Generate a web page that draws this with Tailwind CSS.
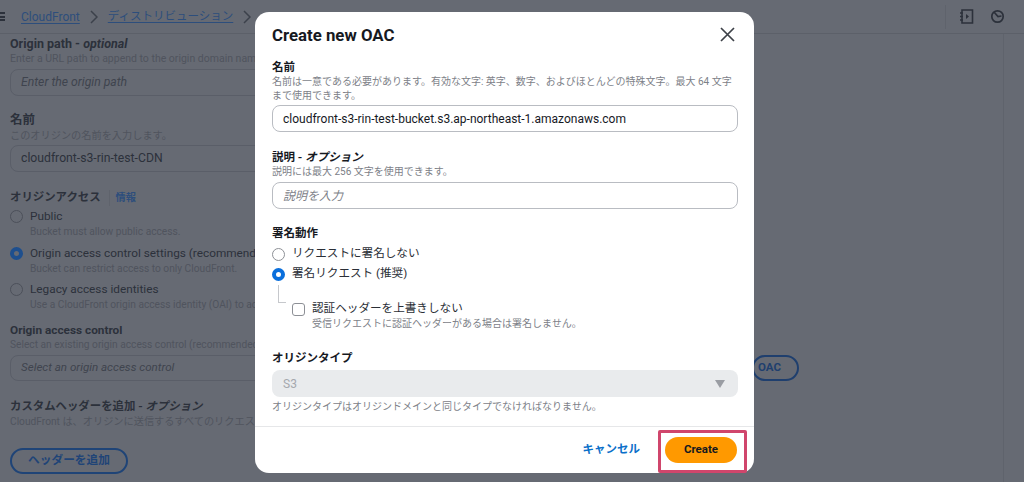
<!DOCTYPE html>
<html lang="ja">
<head>
    <meta charset="UTF-8">
    <meta name="viewport" content="width=device-width, initial-scale=1.0">
    <title>Create new OAC</title>
    <script src="https://cdn.jsdelivr.net/npm/@tailwindcss/browser@4"></script>
</head>
<body class="bg-[#666a73] font-['Roboto','Noto_Sans_CJK_JP',sans-serif] overflow-hidden">
    <div class="relative w-[1024px] h-[482px] overflow-hidden">
        <!-- page behind the dialog -->
        <div class="h-[34px] border-b border-[#5c6069] flex items-center text-[12px]">
            <div class="w-[5px] h-[9px] border-y-2 border-[#2c313b] relative">
                <div class="absolute top-[1.5px] left-0 w-[5px] h-[2px] bg-[#2c313b]"></div>
            </div>
            <a class="ml-[16px] text-[#2d4e7c] underline underline-offset-2">CloudFront</a>
            <svg class="ml-[10px] w-[8px] h-[14px]" viewBox="0 0 8 14" fill="none" stroke="#3c414b" stroke-width="1.5"><path d="M1 1l6 6-6 6"/></svg>
            <a class="ml-[10px] text-[11.500px] text-[#2d4e7c] underline underline-offset-2">ディストリビューション</a>
            <svg class="ml-[10px] w-[8px] h-[14px]" viewBox="0 0 8 14" fill="none" stroke="#3c414b" stroke-width="1.5"><path d="M1 1l6 6-6 6"/></svg>
            <div class="ml-auto flex items-center h-full">
                <div class="h-[24px] border-l border-[#5f636c] mr-[13px]"></div>
                <svg class="w-[15px] h-[15px]" viewBox="0 0 15 15" fill="none" stroke="#2c313b" stroke-width="1.6"><path d="M3 1h10.500v13H3zM1 4h3M1 7.500h3M1 11h3"/><path d="M7 5l3 2.500-3 2.500z" fill="#2c313b" stroke="none"/></svg>
                <svg class="ml-[16px] mr-[19px] w-[15px] h-[15px]" viewBox="0 0 15 15" fill="none" stroke="#2c313b" stroke-width="1.700"><circle cx="7.500" cy="7.500" r="5.700"/><path d="M4 3l4 4.500 3.500-.5"/></svg>
            </div>
        </div>
        <div class="absolute left-[1003px] top-[34px] bottom-0 w-px bg-[#5f636c]"></div>

        <div class="pl-[10px] w-[800px] text-[#2c313b]">
            <p class="mt-[1px] text-[12.500px] leading-[18px] font-bold">Origin path - <i>optional</i></p>
            <p class="mt-[-2px] text-[10.500px] leading-[15px] text-[#50545e] whitespace-nowrap">Enter a URL path to append to the origin domain name for origin requests.</p>
            <div class="mt-[3px] h-[27px] w-[300px] rounded-[8px] border border-[#5a5e68] pl-[10px] flex items-center text-[12.200px] italic text-[#3f444e]">Enter the origin path</div>

            <p class="mt-[15px] text-[12.500px] leading-[18px] font-bold">名前</p>
            <p class="-mt-[1px] text-[10.200px] leading-[15px] text-[#50545e]">このオリジンの名前を入力します。</p>
            <div class="mt-[2px] h-[27px] w-[300px] rounded-[8px] border border-[#5a5e68] pl-[10px] flex items-center text-[12.200px] text-[#2c313b]">cloudfront-s3-rin-test-CDN</div>

            <div class="mt-[17px] flex items-center h-[18px]">
                <span class="text-[11.400px] font-bold">オリジンアクセス</span>
                <span class="ml-[8px] h-[16px] border-l border-[#5f636c]"></span>
                <span class="ml-[6px] text-[10.200px] font-bold text-[#2d4e7c]">情報</span>
            </div>

            <div class="mt-[1px] flex items-center h-[17px]">
                <span class="w-[13px] h-[13px] rounded-full border border-[#4c505a]"></span>
                <span class="ml-[7px] text-[11.800px] text-[#2c313b]">Public</span>
            </div>
            <p class="-mt-[1px] pl-[20px] text-[10.200px] leading-[15px] text-[#50545e]">Bucket must allow public access.</p>
            <div class="mt-[6px] flex items-center h-[17px]">
                <span class="w-[13px] h-[13px] rounded-full border-[4px] border-[#1e4f8e] bg-[#666a73]"></span>
                <span class="ml-[7px] text-[11.800px] text-[#2c313b] whitespace-nowrap">Origin access control settings (recommended)</span>
            </div>
            <p class="-mt-[1px] pl-[20px] text-[10.200px] leading-[15px] text-[#50545e]">Bucket can restrict access to only CloudFront.</p>
            <div class="mt-[5px] flex items-center h-[17px]">
                <span class="w-[13px] h-[13px] rounded-full border border-[#4c505a]"></span>
                <span class="ml-[7px] text-[11.800px] text-[#2c313b]">Legacy access identities</span>
            </div>
            <p class="-mt-[1px] pl-[20px] text-[10.200px] leading-[15px] text-[#50545e] whitespace-nowrap">Use a CloudFront origin access identity (OAI) to access the S3 bucket.</p>

            <p class="mt-[9px] text-[11.800px] leading-[18px] font-bold">Origin access control</p>
            <p class="-mt-[2px] text-[10.200px] leading-[15px] text-[#50545e] whitespace-nowrap">Select an existing origin access control (recommended) or create a new control.</p>
            <div class="mt-[3px] flex items-center gap-[12px]">
                <div class="h-[26px] w-[732px] rounded-[8px] border border-[#5a5e68] pl-[10px] flex items-center text-[11.600px] italic text-[#3f444e]">Select an origin access control</div>
                <div class="h-[26px] w-[47px] rounded-full border-2 border-[#1f3f6e] flex items-center justify-end pr-[16px] text-[11.500px] font-bold text-[#1f3f6e] shrink-0 -ml-[2px]">OAC</div>
            </div>

            <p class="mt-[16px] text-[11.400px] leading-[18px] font-bold">カスタムヘッダーを追加 - <i>オプション</i></p>
            <p class="-mt-[1px] text-[10.200px] leading-[15px] text-[#50545e] whitespace-nowrap">CloudFront は、オリジンに送信するすべてのリクエストにこのヘッダーを追加します。</p>
            <div class="mt-[19px] h-[26px] w-[118px] rounded-full border-2 border-[#1f4477] flex items-center justify-center text-[11.700px] font-bold text-[#1f4477]">ヘッダーを追加</div>
        </div>

        <!-- dialog -->
        <div class="absolute left-[255px] top-[12px] w-[499px] h-[461px] bg-white rounded-[14px] flex flex-col text-[#16191f]">
            <div class="flex-1 px-[17px]">
                <div class="flex items-center justify-between h-[22px] mt-[12px]">
                    <h2 class="text-[16.800px] font-bold leading-[22px]">Create new OAC</h2>
                    <svg class="mr-[2px] -mt-[1px] w-[15px] h-[15px]" viewBox="0 0 15 15" fill="none" stroke="#3d4148" stroke-width="1.700"><path d="M1 1l13 13M14 1L1 14"/></svg>
                </div>

                <p class="mt-[13px] text-[11.500px] leading-[16px] font-bold">名前</p>
                <p class="w-[466px] text-[10px] leading-[14px] text-[#7d8188]">名前は一意である必要があります。有効な文字: 英字、数字、およびほとんどの特殊文字。最大 64 文字まで使用できます。</p>
                <div class="mt-[2px] h-[27px] w-[466px] rounded-[8px] border border-[#b9bcc2] pl-[10px] flex items-center text-[12px] text-[#16191f]">cloudfront-s3-rin-test-bucket.s3.ap-northeast-1.amazonaws.com</div>

                <p class="mt-[17px] text-[11.500px] leading-[16px] font-bold">説明 - <i>オプション</i></p>
                <p class="text-[10px] leading-[14px] text-[#7d8188]">説明には最大 256 文字を使用できます。</p>
                <div class="mt-[3px] h-[27px] w-[466px] rounded-[8px] border border-[#b9bcc2] pl-[10px] flex items-center text-[12px] italic text-[#7d8188]">説明を入力</div>

                <p class="mt-[16px] text-[11.500px] leading-[16px] font-bold">署名動作</p>
                <div class="mt-[3px] flex items-center h-[20px]">
                    <span class="w-[13px] h-[13px] rounded-full border border-[#8d9096]"></span>
                    <span class="ml-[7px] text-[11.600px] text-[#2a2e36]">リクエストに署名しない</span>
                </div>
                <div class="flex items-center h-[20px]">
                    <span class="w-[13px] h-[13px] rounded-full border-[4px] border-[#0a6fdc] bg-white"></span>
                    <span class="ml-[7px] text-[11.600px] text-[#2a2e36]">署名リクエスト (推奨)</span>
                </div>
                <div class="flex">
                    <div class="ml-[6px] mt-[1px] w-[8px] h-[18px] border-l border-b border-[#c6c8cc]"></div>
                    <div class="ml-[6px] mt-[16px]">
                        <div class="flex items-center h-[18px]">
                            <span class="w-[13px] h-[13px] rounded-[3px] border border-[#8d9096]"></span>
                            <span class="ml-[7px] text-[11.600px] text-[#2a2e36]">認証ヘッダーを上書きしない</span>
                        </div>
                        <p class="-mt-[1px] pl-[20px] text-[10px] leading-[14px] text-[#7d8188]">受信リクエストに認証ヘッダーがある場合は署名しません。</p>
                    </div>
                </div>

                <p class="mt-[19px] text-[11.500px] leading-[16px] font-bold">オリジンタイプ</p>
                <div class="mt-[4px] h-[27px] w-[466px] rounded-[8px] bg-[#e9ebed] pl-[11px] pr-[13px] flex items-center justify-between text-[12px] text-[#a5a8ae]">
                    <span>S3</span>
                    <svg class="w-[10px] h-[8px]" viewBox="0 0 10 8" fill="#9a9da3"><path d="M0 0h10L5 8z"/></svg>
                </div>
                <p class="mt-[3px] text-[10px] leading-[14px] text-[#7d8188]">オリジンタイプはオリジンドメインと同じタイプでなければなりません。</p>
            </div>

            <div class="h-[47px] border-t border-[#e6e7e9] flex items-center justify-end pr-[17px] relative">
                <span class="mr-[25px] text-[11.500px] font-bold text-[#0a6fc9]">キャンセル</span>
                <button class="w-[72px] h-[26px] rounded-full bg-[#ff9900] text-[11.500px] font-bold text-[#16191f]">Create</button>
                <div class="absolute left-[403px] top-[3px] w-[89px] h-[43px] border-[3px] border-[#d0466c] rounded-[2px]"></div>
            </div>
        </div>
    </div>
</body>
</html>
